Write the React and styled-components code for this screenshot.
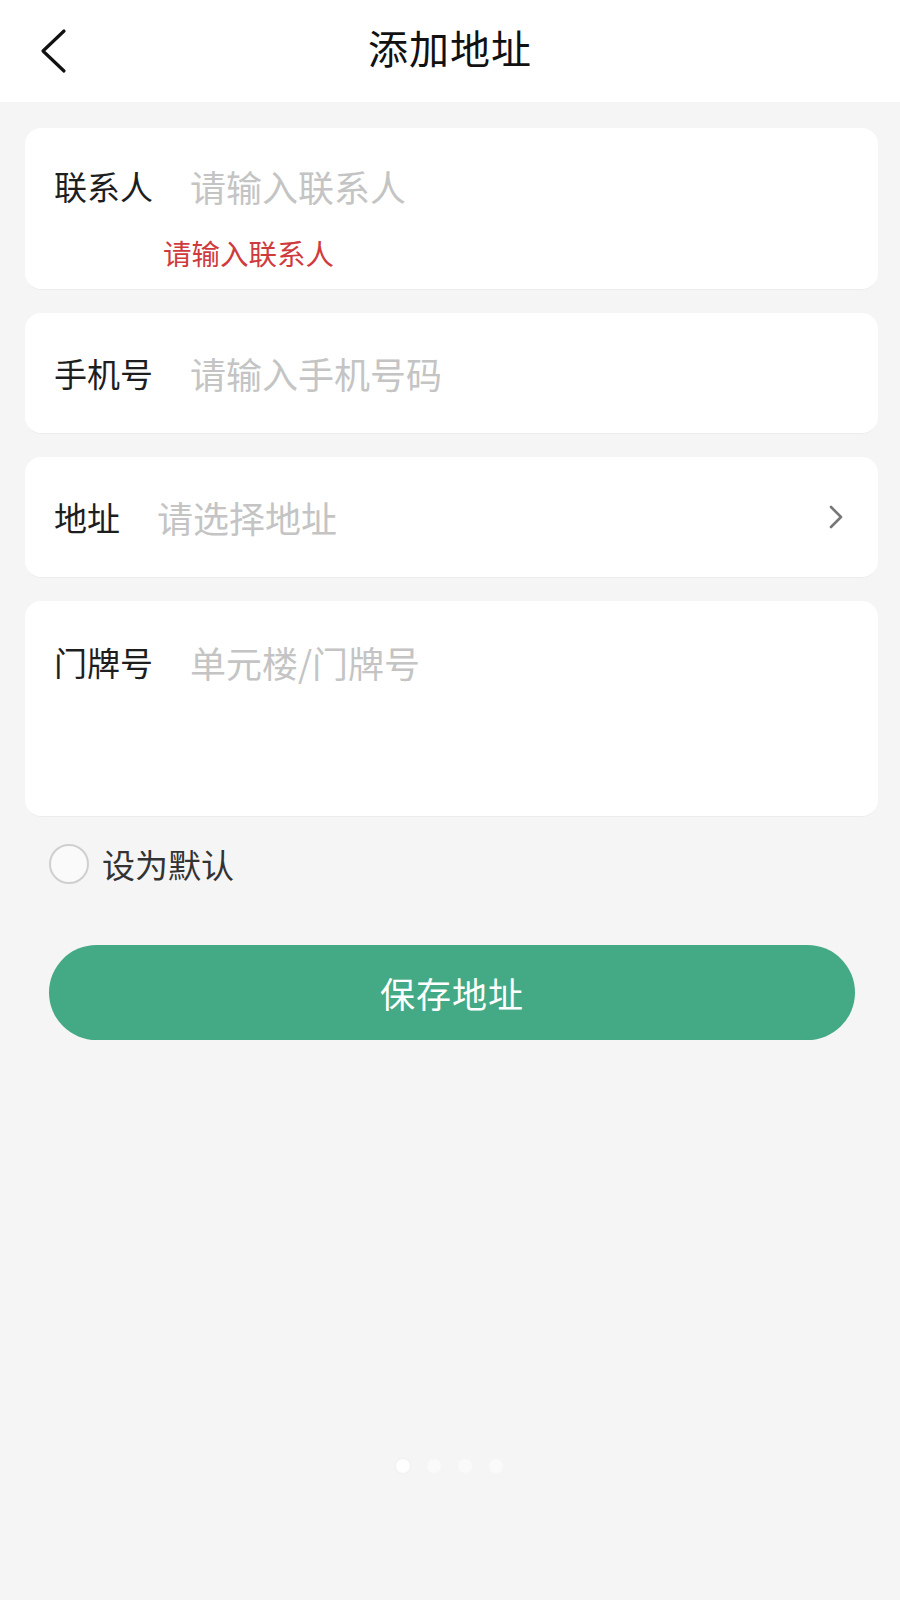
import React from "react";
import styled, { createGlobalStyle } from "styled-components";

const Global = createGlobalStyle`
  html, body { margin: 0; padding: 0; }
  body {
    background: #f5f5f5;
    font-family: "Noto Sans CJK SC", "Noto Sans", sans-serif;
  }
  * { box-sizing: border-box; }
`;

const Page = styled.div`
  min-height: 1600px;
  background: #f5f5f5;
  display: flex;
  flex-direction: column;
`;

const Header = styled.header`
  height: 102px;
  background: #fff;
  display: grid;
  grid-template-columns: 100px 1fr 100px;
  align-items: center;
`;

const BackButton = styled.button`
  border: 0;
  background: none;
  padding: 0 0 0 38px;
  display: flex;
  align-items: center;
  height: 100%;
  cursor: pointer;
`;

const Title = styled.h1`
  margin: 0;
  text-align: center;
  font-size: 40px;
  font-weight: 400;
  color: #111;
  letter-spacing: 1px;
  transform: translateY(-4px);
`;

const Form = styled.div`
  display: flex;
  flex-direction: column;
  gap: 24px;
  padding: 26px 22px 0 25px;
`;

const Card = styled.div`
  background: #fff;
  border-radius: 16px;
  padding: ${(p) => p.$pad || "42px 29px 42px"};
  min-height: ${(p) => p.$minH || "0"};
  box-shadow: 0 2px 0 -1px #ececec;
`;

const Row = styled.div`
  display: flex;
  align-items: center;
  height: 36px;
`;

const Label = styled.span`
  font-size: 33px;
  color: #1e1e1e;
  margin-right: 37px;
  white-space: nowrap;
  line-height: 36px;
`;

const Placeholder = styled.span`
  flex: 1;
  font-size: 36px;
  color: #c4c4c4;
  line-height: 36px;
  white-space: nowrap;
`;

const ErrorText = styled.div`
  margin-top: 34px;
  padding-left: 109px;
  font-size: 28.5px;
  line-height: 30px;
  color: #cf3b3d;
`;

const Chevron = styled.svg`
  width: 16px;
  height: 26px;
  margin-right: 5px;
`;

const DefaultRow = styled.label`
  display: flex;
  align-items: center;
  gap: 13px;
  padding-left: 49px;
  height: 96px;
  align-self: flex-start;
`;

const Radio = styled.span`
  width: 40px;
  height: 40px;
  border-radius: 50%;
  border: 2.5px solid #cfcfcf;
  background: #fafafa;
`;

const DefaultText = styled.span`
  font-size: 33px;
  color: #333;
`;

const SaveButton = styled.button`
  margin: 33px 45px 0 49px;
  height: 95px;
  border: 0;
  border-radius: 48px;
  background: #43aa85;
  color: #fff;
  font-family: inherit;
  font-size: 35px;
  letter-spacing: 1px;
  cursor: pointer;
`;

const Dots = styled.div`
  display: flex;
  gap: 17px;
  padding-left: 396px;
  margin-top: 419px;
`;

const Dot = styled.span`
  width: 14px;
  height: 14px;
  border-radius: 50%;
  background: ${(p) => (p.$active ? "#ffffff" : "#fafafa")};
  box-shadow: ${(p) => (p.$active ? "0 0 3px #eaeaea" : "none")};
`;

export default function App() {
  return (
    <Page>
      <Global />
      <Header>
        <BackButton aria-label="返回">
          <svg width="30" height="46" viewBox="0 0 30 46" fill="none">
            <path d="M26 3 L5 23 L26 43" stroke="#111" strokeWidth="3.2" strokeLinecap="round" strokeLinejoin="round" />
          </svg>
        </BackButton>
        <Title>添加地址</Title>
        <div />
      </Header>
      <Form>
        <Card $pad="40px 29px 21px">
          <Row>
            <Label>联系人</Label>
            <Placeholder>请输入联系人</Placeholder>
          </Row>
          <ErrorText>请输入联系人</ErrorText>
        </Card>
        <Card>
          <Row>
            <Label>手机号</Label>
            <Placeholder>请输入手机号码</Placeholder>
          </Row>
        </Card>
        <Card>
          <Row>
            <Label>地址</Label>
            <Placeholder>请选择地址</Placeholder>
            <Chevron viewBox="0 0 16 26" fill="none">
              <path d="M3 3 L13 13 L3 23" stroke="#777" strokeWidth="2.6" strokeLinecap="round" strokeLinejoin="round" />
            </Chevron>
          </Row>
        </Card>
        <Card $pad="43px 29px" $minH="215px">
          <Row>
            <Label>门牌号</Label>
            <Placeholder>单元楼/门牌号</Placeholder>
          </Row>
        </Card>
      </Form>
      <DefaultRow>
        <Radio />
        <DefaultText>设为默认</DefaultText>
      </DefaultRow>
      <SaveButton>保存地址</SaveButton>
      <Dots>
        <Dot $active />
        <Dot />
        <Dot />
        <Dot />
      </Dots>
    </Page>
  );
}
